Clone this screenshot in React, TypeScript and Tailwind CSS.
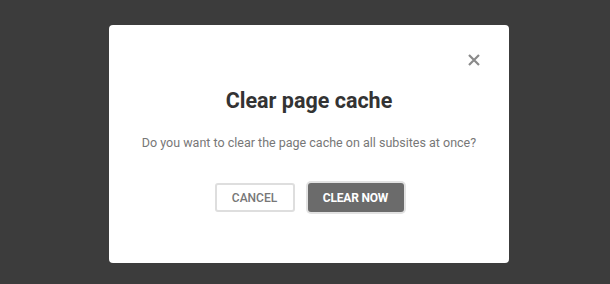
import React from "react";

export default function App() {
  return (
    <div className="w-[610px] h-[284px] bg-[#3c3c3c] pt-[25px] pl-[109px] overflow-hidden" style={{ fontFamily: "Roboto, 'Liberation Sans', sans-serif" }}>
      <div className="w-[400px] h-[238px] bg-white rounded-[4px] flex flex-col items-center">
        <div className="w-full flex justify-end pt-[29px] pr-[29px]">
          <button className="w-[12px] h-[12px] flex items-center justify-center" aria-label="Close">
            <svg width="12" height="12" viewBox="0 0 12 12">
              <path d="M1 1 L11 11 M11 1 L1 11" stroke="#8a8a8a" strokeWidth="2.2" strokeLinecap="butt" />
            </svg>
          </button>
        </div>
        <h2 className="mt-[22px] text-[21.5px] leading-[26px] font-bold text-[#333333]">Clear page cache</h2>
        <p className="mt-[19px] text-[12.5px] leading-[20px] text-[#777777]">Do you want to clear the page cache on all subsites at once?</p>
        <div className="mt-[30px] flex items-center gap-[13px]">
          <button className="w-[80px] h-[29px] border-2 border-[#dedede] rounded-[3px] bg-white text-[12px] font-medium text-[#777777] uppercase">Cancel</button>
          <button className="w-[96px] h-[29px] rounded-[3px] bg-[#6b6b6b] ring-2 ring-[#e2e2e2] text-[12px] font-bold text-white uppercase tracking-[-0.2px]">Clear now</button>
        </div>
      </div>
    </div>
  );
}
